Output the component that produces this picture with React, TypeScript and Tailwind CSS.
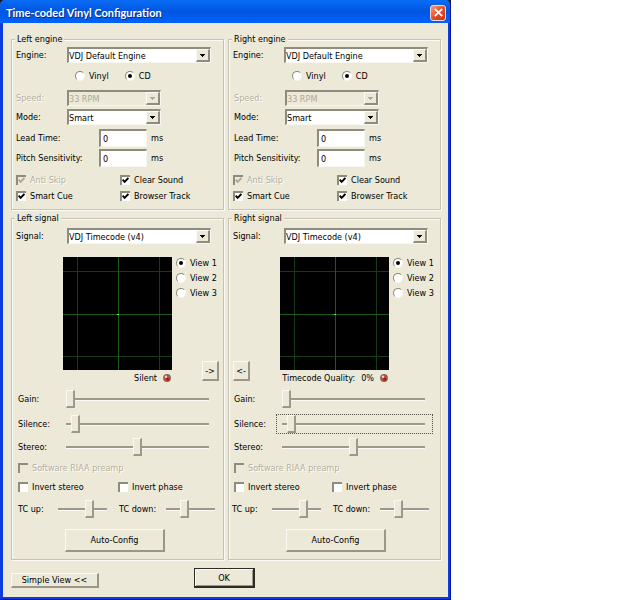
import { useState } from 'react';
import type { ReactNode } from 'react';

type Side = 'left' | 'right';

const views = ['View 1', 'View 2', 'View 3'];

function Group({ title, className, children }: { title: string; className: string; children: ReactNode }) {
  return (
    <fieldset
      className={`min-w-0 border border-[#c6c3b4] shadow-[1px_1px_0_#fbfaf4,inset_1px_1px_0_#fbfaf4] ${className}`}
    >
      <legend className="ml-[3px] h-3 bg-[#ece9d8] px-0.5 leading-3">{title}</legend>
      {children}
    </fieldset>
  );
}

function Combo({ id, options, disabled, className }: { id: string; options: string[]; disabled?: boolean; className: string }) {
  return (
    <div className={`relative ${className}`}>
      <select
        id={id}
        disabled={disabled}
        className="block h-4 w-full appearance-none border-t-2 border-l-2 border-r border-b border-t-[#8f8c7d] border-l-[#8f8c7d] border-r-[#f8f7f0] border-b-[#f8f7f0] bg-white pr-4 leading-3 text-black opacity-100 outline-none disabled:bg-[#ece9d8] disabled:text-[#aca899]"
      >
        {options.map((option) => (
          <option key={option}>{option}</option>
        ))}
      </select>
      <span className="pointer-events-none absolute top-0.5 right-px bottom-px flex w-3.5 items-center justify-center border-t border-l border-r-2 border-b-2 border-t-[#fbfaf5] border-l-[#fbfaf5] border-r-[#8f8c7d] border-b-[#8f8c7d] bg-[#ece9d8]">
        <svg viewBox="0 0 5 3" className="h-[3px] w-[5px]" shapeRendering="crispEdges">
          <path d="M0 0h5v1H4v1H3v1H2V2H1V1H0z" fill={disabled ? '#aca899' : '#000'} />
        </svg>
      </span>
    </div>
  );
}

function Radio({ name, label, checked, onChange }: { name: string; label: string; checked: boolean; onChange: () => void }) {
  return (
    <label className="flex h-3 items-center gap-1 whitespace-nowrap">
      <input
        type="radio"
        name={name}
        checked={checked}
        onChange={onChange}
        className="grid h-2.5 w-2.5 shrink-0 appearance-none place-items-center rounded-full border border-t-[#8a8778] border-r-[#f8f7f0] border-b-[#f8f7f0] border-l-[#8a8778] bg-white before:h-1 before:w-1 before:rounded-full checked:before:bg-black"
      />
      {label}
    </label>
  );
}

function Check({ label, checked, disabled }: { label: string; checked?: boolean; disabled?: boolean }) {
  return (
    <label
      className={`flex h-3 items-center gap-1 whitespace-nowrap ${disabled ? 'text-[#b3b0a1] [text-shadow:1px_1px_0_#fff]' : ''}`}
    >
      <span className="relative h-2.5 w-2.5 shrink-0">
        <input
          type="checkbox"
          defaultChecked={checked}
          disabled={disabled}
          className="peer block h-2.5 w-2.5 appearance-none border-t-2 border-l-2 border-t-[#8f8c7d] border-l-[#8f8c7d] bg-white disabled:bg-[#ece9d8]"
        />
        <svg
          viewBox="0 0 7 7"
          className="pointer-events-none absolute top-0.5 left-0.5 hidden h-[7px] w-[7px] peer-checked:block"
        >
          <path d="M0.6 2.6L2.6 4.8L6.4 1" fill="none" stroke={disabled ? '#aca899' : '#000'} strokeWidth="1.9" />
        </svg>
      </span>
      {label}
    </label>
  );
}

function Slider({ id, value, className }: { id: string; value: number; className: string }) {
  return (
    <input
      id={id}
      type="range"
      defaultValue={value}
      className={`block h-5 min-w-0 appearance-none bg-transparent outline-none [&::-webkit-slider-runnable-track]:h-[3px] [&::-webkit-slider-runnable-track]:border-b [&::-webkit-slider-runnable-track]:border-[#fbfaf4] [&::-webkit-slider-runnable-track]:bg-[#9c998a] [&::-webkit-slider-thumb]:-mt-2 [&::-webkit-slider-thumb]:h-[18px] [&::-webkit-slider-thumb]:w-[9px] [&::-webkit-slider-thumb]:appearance-none [&::-webkit-slider-thumb]:border-t [&::-webkit-slider-thumb]:border-r-2 [&::-webkit-slider-thumb]:border-b-2 [&::-webkit-slider-thumb]:border-l [&::-webkit-slider-thumb]:border-t-[#fbfaf4] [&::-webkit-slider-thumb]:border-r-[#9c998a] [&::-webkit-slider-thumb]:border-b-[#9c998a] [&::-webkit-slider-thumb]:border-l-[#fbfaf4] [&::-webkit-slider-thumb]:bg-[#ece9d8] ${className}`}
    />
  );
}

function PushButton({ className, children }: { className: string; children: ReactNode }) {
  return (
    <button
      type="button"
      className={`border-t border-r-2 border-b-2 border-l border-t-[#fbfaf4] border-r-[#9a9788] border-b-[#9a9788] border-l-[#fbfaf4] bg-[#ece9d8] leading-3 whitespace-nowrap ${className}`}
    >
      {children}
    </button>
  );
}

function NumberRow({ id, label, className }: { id: string; label: string; className: string }) {
  return (
    <div className={`flex items-center ${className}`}>
      <label htmlFor={id} className="w-[83px] whitespace-nowrap">{label}</label>
      <input
        id={id}
        type="text"
        defaultValue="0"
        className="h-[18px] w-12 border-t-2 border-r border-b border-l-2 border-t-[#8f8c7d] border-r-[#f8f7f0] border-b-[#f8f7f0] border-l-[#8f8c7d] bg-white pl-0.5 leading-3 outline-none"
      />
      <span className="ml-1">ms</span>
    </div>
  );
}

function Engine({ side }: { side: Side }) {
  const [medium, setMedium] = useState('CD');
  const isLeft = side === 'left';
  const indent = isLeft ? 'pl-1' : 'pl-[5px]';

  return (
    <Group title={isLeft ? 'Left engine' : 'Right engine'} className="pb-[7px]">
      <div className="mt-0.5 flex items-center pl-1">
        <label htmlFor={`${side}-engine`} className="w-[51px]">Engine:</label>
        <Combo id={`${side}-engine`} options={['VDJ Default Engine']} className="w-36" />
      </div>
      <div className="mt-[7px] flex gap-4 pl-[63px]">
        {['Vinyl', 'CD'].map((item) => (
          <Radio
            key={item}
            name={`${side}-medium`}
            label={item}
            checked={medium === item}
            onChange={() => setMedium(item)}
          />
        ))}
      </div>
      <div className={`mt-2 flex items-center ${indent}`}>
        <label htmlFor={`${side}-speed`} className="w-[51px] text-[#b3b0a1] [text-shadow:1px_1px_0_#fff]">Speed:</label>
        <Combo id={`${side}-speed`} options={['33 RPM']} disabled className="w-[94px]" />
      </div>
      <div className={`mt-[3px] flex items-center ${indent}`}>
        <label htmlFor={`${side}-mode`} className="w-[51px]">Mode:</label>
        <Combo id={`${side}-mode`} options={['Smart']} className="w-[94px]" />
      </div>
      <NumberRow id={`${side}-lead`} label="Lead Time:" className={`mt-1 ${indent}`} />
      <NumberRow id={`${side}-pitch`} label="Pitch Sensitivity:" className={`mt-0.5 ${indent}`} />
      <div className="mt-[7px] grid grid-cols-[104px_1fr] gap-y-1 pl-1">
        <Check label="Anti Skip" checked disabled />
        <Check label="Clear Sound" checked />
        <Check label="Smart Cue" checked />
        <Check label="Browser Track" checked />
      </div>
    </Group>
  );
}

function Scope() {
  return (
    <svg viewBox="0 0 109 113" className="block h-[113px] w-[109px] bg-black" shapeRendering="crispEdges">
      <path d="M14.5 0v113M96.5 0v113M0 14.5h109M0 99.5h109" stroke="#163c16" fill="none" />
      <path d="M55.5 0v113M0 57.5h109" stroke="#1c5a1c" fill="none" />
      <path d="M54 57h2v1h-2z" fill="#3dff3d" />
    </svg>
  );
}

function Led() {
  return (
    <svg viewBox="0 0 8 8" className="h-2 w-2 shrink-0">
      <circle cx="4" cy="4" r="3.9" fill="#6e6a66" />
      <circle cx="4" cy="4" r="3.1" fill="#cf4a30" />
      <circle cx="4.8" cy="5.2" r="1.6" fill="#9c2414" />
      <circle cx="3" cy="2.8" r="1.2" fill="#ffd0c0" />
    </svg>
  );
}

function Signal({ side }: { side: Side }) {
  const [view, setView] = useState('View 1');
  const isLeft = side === 'left';
  const sliders = [
    { label: 'Gain:', value: 0, gap: 'mt-1' },
    { label: 'Silence:', value: 4, gap: 'mt-[5px]' },
    { label: 'Stereo:', value: 50, gap: 'mt-[3px]' },
  ];

  return (
    <Group title={isLeft ? 'Left signal' : 'Right signal'} className="pb-[7px]">
      <div className="mt-1 flex items-center pl-1">
        <label htmlFor={`${side}-signal`} className="w-[51px]">Signal:</label>
        <Combo id={`${side}-signal`} options={['VDJ Timecode (v4)']} className="w-36" />
      </div>

      <div className="mt-[13px] flex">
        <div className="flex w-[51px] items-end pb-1 pl-1">
          {!isLeft && <PushButton className="h-5 w-[17px]">&lt;-</PushButton>}
        </div>
        <div className="w-[109px]">
          <Scope />
          <div className="mt-0.5 mb-px flex h-3 items-center justify-end gap-1.5 pr-px whitespace-nowrap">
            {isLeft ? <span>Silent</span> : <><span>Timecode Quality:</span><span>0%</span></>}
            <Led />
          </div>
        </div>
        <div className="flex flex-1 flex-col gap-[3px] pb-1 pl-1">
          {views.map((item) => (
            <Radio
              key={item}
              name={`${side}-view`}
              label={item}
              checked={view === item}
              onChange={() => setView(item)}
            />
          ))}
          {isLeft && <PushButton className="mt-auto mr-1 h-5 w-[17px] self-end">-&gt;</PushButton>}
        </div>
      </div>

      {sliders.map(({ label, value, gap }) => (
        <div key={label} className={`flex items-center ${isLeft ? 'pl-1.5' : 'pl-[5px]'} ${gap}`}>
          <label htmlFor={`${side}-${label}`} className="w-[42px]">{label}</label>
          <Slider
            id={`${side}-${label}`}
            value={value}
            className={`w-[157px] border border-dotted pr-[7px] pl-[5px] ${!isLeft && label === 'Silence:' ? 'border-[#55534a]' : 'border-transparent'}`}
          />
        </div>
      ))}

      <div className={`mt-[5px] grid gap-y-[7px] ${isLeft ? 'grid-cols-[100px_1fr] pl-1.5' : 'grid-cols-[98px_1fr] pl-[5px]'}`}>
        <div className="col-span-2">
          <Check label="Software RIAA preamp" disabled />
        </div>
        <Check label="Invert stereo" />
        <Check label="Invert phase" />
      </div>

      <div className={`mt-1.5 flex items-center ${isLeft ? 'pl-1.5' : 'pl-[3px]'}`}>
        <label htmlFor={`${side}-tc-up`} className="w-10 whitespace-nowrap">TC up:</label>
        <Slider id={`${side}-tc-up`} value={67} className="w-[49px]" />
        <label htmlFor={`${side}-tc-down`} className="ml-3 w-[47px] whitespace-nowrap">TC down:</label>
        <Slider id={`${side}-tc-down`} value={35} className="w-[49px]" />
      </div>

      <div className={`mt-2.5 ${isLeft ? 'pl-[53px]' : 'pl-[57px]'}`}>
        <PushButton className="h-[23px] w-[100px]">Auto-Config</PushButton>
      </div>
    </Group>
  );
}

export default function App() {
  return (
    <main className="min-h-screen bg-white">
      <div className="w-full max-w-[451px] bg-[#1a1a1a] font-['DejaVu_Sans_Condensed','DejaVu_Sans',sans-serif] text-[9px] leading-3 text-black">
        <div className="overflow-hidden rounded-t-[5px] border-r border-b border-[#0016a0] bg-[#0a3ce0]">
          <header className="flex h-[23px] items-center justify-between bg-linear-to-b from-[#0a6cf5] via-[#0055e0] to-[#0062fa] pt-0.5 pr-1 pl-1.5">
            <h1 className="font-['Lato',sans-serif] text-[11px] font-bold text-white [text-shadow:1px_1px_0_#0a2a80]">
              Time-coded Vinyl Configuration
            </h1>
            <button
              type="button"
              aria-label="Close"
              className="flex h-4 w-4 items-center justify-center rounded-[3px] border border-[#f3d9d8] bg-linear-to-br from-[#f09a80] via-[#e0502c] to-[#c43510]"
            >
              <svg viewBox="0 0 9 9" className="h-[9px] w-[9px]">
                <path d="M0.8 0.8l7.4 7.4M8.2 0.8L0.8 8.2" stroke="#fff" strokeWidth="1.8" />
              </svg>
            </button>
          </header>
          <div className="pr-0.5 pb-0.5 pl-[3px]">
            <div className="bg-[#ece9d8] pt-2.5 pr-[7px] pb-[9px] pl-2">
              <div className="grid grid-cols-2 gap-x-1 gap-y-0.5">
                <Engine side="left" />
                <Engine side="right" />
                <Signal side="left" />
                <Signal side="right" />
              </div>
              <footer className="mt-2 flex items-end">
                <PushButton className="h-[15px] w-[88px]">Simple View &lt;&lt;</PushButton>
                <button
                  type="button"
                  className="ml-[95px] h-5 w-[61px] border border-r-2 border-b-2 border-[#2c2b26] bg-[#ece9d8] leading-3 shadow-[inset_1px_1px_0_#fbfaf4,inset_-1px_-1px_0_#9a9788]"
                >
                  OK
                </button>
              </footer>
            </div>
          </div>
        </div>
      </div>
    </main>
  );
}
